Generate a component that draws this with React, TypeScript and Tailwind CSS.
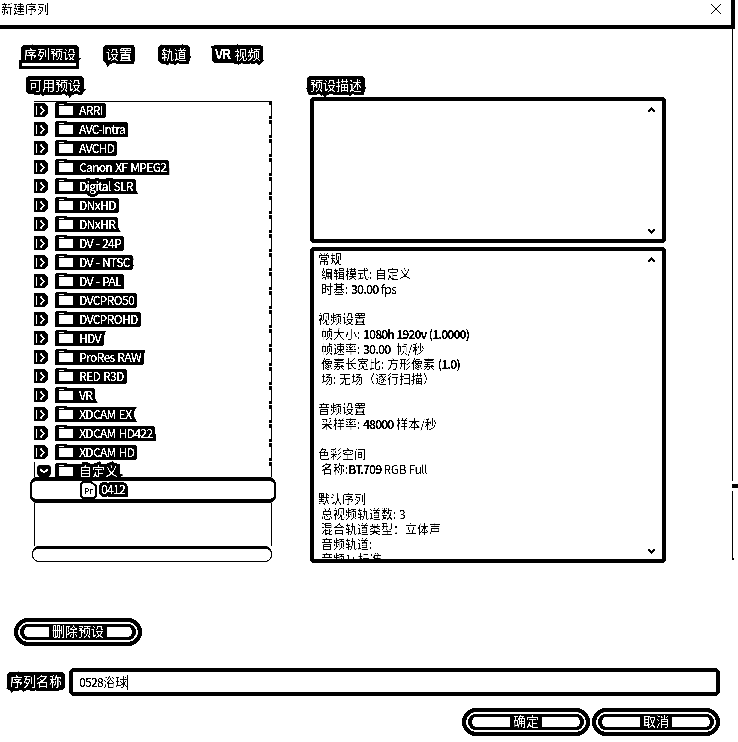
import React from "react";

const presets = [
  "ARRI", "AVC-Intra", "AVCHD", "Canon XF MPEG2", "Digital SLR", "DNxHD", "DNxHR",
  "DV - 24P", "DV - NTSC", "DV - PAL", "DVCPRO50", "DVCPROHD", "HDV", "ProRes RAW",
  "RED R3D", "VR", "XDCAM EX", "XDCAM HD422", "XDCAM HD", "自定义",
];

const halo =
  "text-white whitespace-pre [paint-order:stroke_fill] [-webkit-text-stroke:6px_black]";

function Label({ children, className = "" }: { children: React.ReactNode; className?: string }) {
  return (
    <div className={className}>
      <span className={`${halo} -ml-[3px] block w-fit rounded-[4px] bg-black px-[3px] pb-px text-[13px] leading-[17px]`}>{children}</span>
    </div>
  );
}

function PresetRow({ name, open }: { name: string; open: boolean }) {
  return (
    <div className="flex h-[19px] shrink-0 items-start">
      <svg className="block shrink-0" width="43" height="19" viewBox="0 0 43 19">
        {open ? (
          <>
            <path d="M0 0h1v19h-1zM3 5l2-2h10l2 2v7l-3 3H6l-3-3z" fill="black" />
            <path d="M6 7l4 3.500l4-3.500" fill="none" stroke="white" strokeWidth="2" />
          </>
        ) : (
          <>
            <path d="M0 2h10l4 3v8l-4 3H0z" fill="black" />
            <path d="M2 5h1v9h-1z" fill="white" />
            <path d="M6.500 5.500l3.500 4l-3.500 4" fill="none" stroke="white" strokeWidth="1.700" />
          </>
        )}
        <path d="M21 2l2-1h9l2 1h11v15H21z" fill="black" />
        <path d="M25 5h14v9h-14z" fill="white" />
        <path d="M25 4h5v1h-5z" fill="black" />
        <path d="M25 3h5v1h-5z" fill="white" />
      </svg>
      <span className={`${halo} mt-[2px] rounded-r-[3px] bg-black pb-[2px] pl-[2px] leading-[13px] ${open ? "pr-[2px] text-[13px]" : "pr-[3px] text-[12px] font-medium tracking-[-0.8px] [word-spacing:1px]"}`}>{name}</span>
      <div className="ml-auto h-[18px] w-[3px] border-r border-black bg-[linear-gradient(black_4px,white_4px,white_15px,black_15px)]" />
    </div>
  );
}

function Arrow({ down = false }: { down?: boolean }) {
  return (
    <svg className="block" width="9" height="7" viewBox="0 0 9 7">
      <path d={down ? "M1.200 1L4.500 4.500L7.800 1" : "M1.200 6L4.500 2.500L7.800 6"} fill="none" stroke="black" strokeWidth="2.200" />
    </svg>
  );
}

function Pill({ children }: { children: React.ReactNode }) {
  return (
    <button className="flex h-[28px] w-[128px] rounded-full border-4 border-black p-[2px]">
      <span className="flex h-[16px] w-full items-center justify-center rounded-full border-[3px] border-l-4 border-r-4 border-black">
        <span className="relative -top-px bg-black px-[3px] text-[13px] leading-[12px] text-white">{children}</span>
      </span>
    </button>
  );
}

const B = ({ children }: { children: React.ReactNode }) => <span className="font-bold tracking-[-1px] [word-spacing:0.5px]">{children}</span>;

export default function App() {
  return (
    <div className="relative flex h-[742px] w-[738px] flex-col overflow-hidden bg-white font-['Noto_Sans_CJK_SC',sans-serif] text-black contrast-[1000%]">
      <header className="flex h-[29px] w-[735px] justify-between border-b-4 border-r-4 border-black">
        <h1 className="pl-px text-[12px] leading-[18px]">新建序列</h1>
        <svg className="mr-[9px] mt-[3px]" width="12" height="12" viewBox="0 0 12 12">
          <path d="M1 1L11 11M11 1L1 11" stroke="black" strokeWidth="1.200" />
        </svg>
      </header>

      <nav className="flex h-[47px] pl-[24px] pt-[16px]">
        <div className="w-[82px]">
          <Label>序列预设</Label>
          <div className="relative -ml-[5px] -mt-[3px] h-[9px] w-[60px] border-[3px] border-black bg-white" />
        </div>
        <Label className="w-[55px]">设置</Label>
        <Label className="w-[54px]">轨道</Label>
        <Label><span className="font-bold tracking-[-0.8px]">VR</span> <span className="ml-px">视频</span></Label>
      </nav>

      <main className="flex h-[542px]">
        <section className="ml-[30px] w-[246px]">
          <Label className="-ml-px h-[25px]">可用预设</Label>
          <div className="ml-[4px] flex h-[376px] w-[238px] flex-col overflow-hidden border-t border-black [&>*:first-child]:-mt-px">
            {presets.map((name) => <PresetRow key={name} name={name} open={name === "自定义"} />)}
          </div>
          <div className="flex h-[26px] w-[246px] items-center rounded-[7px] border-x-2 border-y-4 border-black pl-[48px]">
            <svg width="19" height="18" viewBox="0 0 19 18">
              <path d="M3 1h8l5 4v10l-2 2H3l-2-2V3z" fill="white" stroke="black" strokeWidth="2" />
              <text x="4" y="12.500" className="text-[8px] font-bold" fill="black">Pr</text>
            </svg>
            <span className={`${halo} relative -top-px ml-px rounded-[3px] bg-black px-px text-[12px] font-medium leading-[10px] tracking-[-0.8px]`}>0412</span>
          </div>
          <div className="ml-[4px] h-[43px] w-[238px] border-x border-black" />
          <div className="ml-[2px] h-[16px] w-[240px] rounded-[7px] border border-t-[3px] border-black" />
        </section>

        <section className="ml-[34px] w-[356px]">
          <Label className="h-[21px]">预设描述</Label>
          <div className="flex h-[146px] flex-col items-end justify-between rounded-[4px] border-4 border-black px-[6px] pb-[4px] pt-[5px]">
            <Arrow /><Arrow down />
          </div>
          <div className="mt-[4px] flex h-[316px] justify-between overflow-hidden rounded-[4px] border-4 border-black pl-[4px] pr-[6px]">
            <pre className="h-full overflow-hidden font-['Noto_Sans_CJK_SC',sans-serif] text-[12px] leading-[15px]">
              <div>常规</div>
              <div className="pl-[3px]">编辑模式: 自定义</div>
              <div className="pl-[3px]">时基: <B>30.00</B> <span className="tracking-[-0.5px]">fps</span></div>
              <br />
              <div>视频设置</div>
              <div className="pl-[3px]">帧大小: <B>1080h 1920v (1.0000)</B></div>
              <div className="pl-[3px]">帧速率: <B>30.00</B>  帧/秒</div>
              <div className="pl-[3px]">像素长宽比: 方形像素 <B>(1.0)</B></div>
              <div className="pl-[3px]">场: 无场（逐行扫描）</div>
              <br />
              <div>音频设置</div>
              <div className="pl-[3px]">采样率: <B>48000</B> 样本/秒</div>
              <br />
              <div>色彩空间</div>
              <div className="pl-[3px]">名称:<B>BT.709</B><span className="tracking-[-0.4px]"> RGB Full</span></div>
              <br />
              <div>默认序列</div>
              <div className="pl-[3px]">总视频轨道数: 3</div>
              <div className="pl-[3px]">混合轨道类型：立体声</div>
              <div className="pl-[3px]">音频轨道:</div>
              <div className="pl-[3px]">音频1: 标准</div>
            </pre>
            <div className="flex flex-col justify-between pb-[4px] pt-[5px]"><Arrow /><Arrow down /></div>
          </div>
        </section>

        <aside className="-mt-[47px] ml-auto flex w-[6px] flex-col">
          <div className="h-[452px] w-px bg-black" />
          <div className="mt-[3px] h-[4px] bg-black" />
          <div className="mt-[3px] h-[67px] w-px bg-black" />
          <div className="h-[2px] w-[2px] bg-black" />
        </aside>
      </main>

      <div className="h-[50px] pl-[14px]"><Pill>删除预设</Pill></div>
      <div className="flex h-[40px] pl-[10px]">
        <Label className="w-[59px] pt-[4px]">序列名称</Label>
        <div className="flex h-[28px] w-[651px] items-center rounded-[5px] border-4 border-black pl-[6px] text-[12px] leading-[16px]">
          <span className="font-medium tracking-[-0.8px]">0528</span>浴球<span className="h-[15px] w-px bg-black" />
        </div>
      </div>
      <footer className="flex gap-[2px] pl-[462px]"><Pill>确定</Pill><Pill>取消</Pill></footer>
    </div>
  );
}
